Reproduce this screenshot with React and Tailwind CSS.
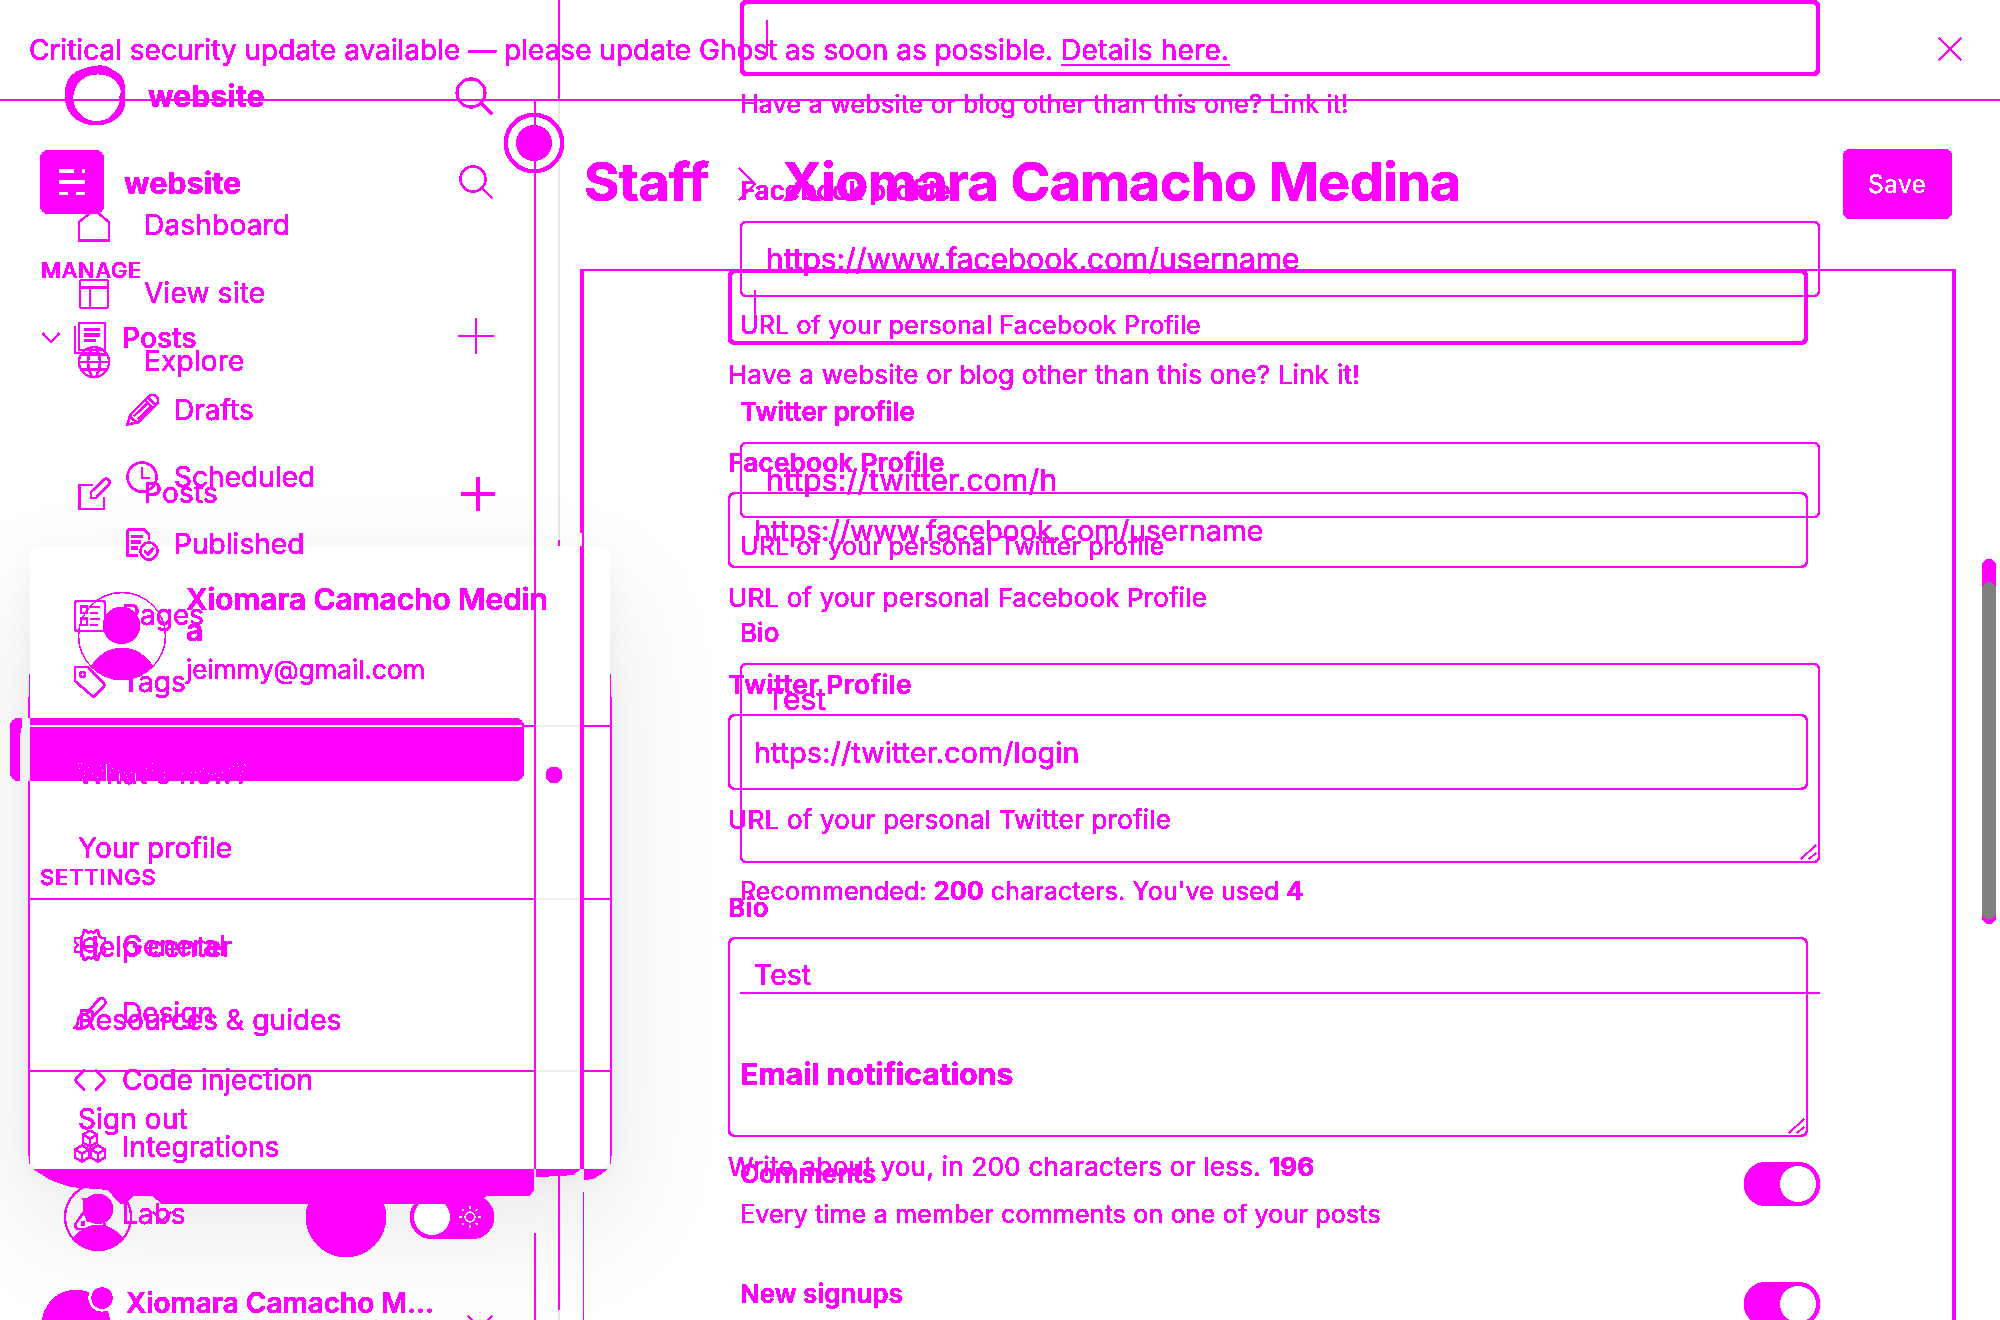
const M = "#f0f";

function Ico({ x, y, w = 34, h = 34, className = "", children, sw = 2 }) {
  return (
    <svg
      className={"shrink-0 " + className}
      width={w}
      height={h}
      viewBox={`${x} ${y} ${w} ${h}`}
      fill="none"
      stroke={M}
      strokeWidth={sw}
    >
      {children}
    </svg>
  );
}

const Cube = ({ x, y }) => (
  <g transform={`translate(${x} ${y})`}>
    <path d="M0 -8L7 -4V4L0 8L-7 4V-4Z" />
    <path d="M-7 -4L0 0L7 -4M0 0V8" />
  </g>
);

function HardEdge() {
  return (
    <svg className="absolute" width="0" height="0">
      <filter id="hard" x="0" y="0" width="100%" height="100%" colorInterpolationFilters="sRGB">
        <feComponentTransfer>
          <feFuncG type="discrete" tableValues="0 0 1 1" />
          <feFuncA type="discrete" tableValues="0 1 1 1 1 1 1 1" />
        </feComponentTransfer>
      </filter>
    </svg>
  );
}

/* ---------- first layer: update banner, staff page ---------- */

function NavA({ icon, children, className = "", sub }) {
  return (
    <div className={"flex h-[67px] items-center text-[28px] tracking-[0.05px] " + (sub ? "pl-[125px] " : "pl-[73px] ") + className}>
      {icon}
      <span className="ml-[15px]">{children}</span>
    </div>
  );
}

function SidebarA() {
  return (
    <aside className="w-[534px] shrink-0">
      <div className="mt-[49px] ml-[40px] flex h-[64px] items-center">
        <div className="flex h-[64px] w-[64px] items-center justify-center rounded-[9px] bg-[#f0f]">
          <svg width="26" height="27" fill="#fff">
            <path d="M0 0H15V4H0Z M23 0H26V4H23Z M0 11H26V15H0Z M0 23H9V26H0Z M17 23H26V26H17Z" />
          </svg>
        </div>
        <span className="mt-[2px] ml-[20px] text-[30px] font-bold tracking-[0.3px]">website</span>
        <Ico x={458} y={164} w={36} h={36} className="mr-[40px] ml-auto" sw={1.8}>
          <circle cx="473" cy="179" r="12.5" />
          <path d="M482 188L492 198" />
        </Ico>
      </div>
      <div className="mt-[43px] ml-[41px] h-[26px] text-[22px] leading-[26px] font-medium tracking-[0.7px]">MANAGE</div>
      <div className="mt-[21px] flex h-[67px] items-center text-[28px] font-medium tracking-[0.1px]">
        <Ico x={41} y={328} w={20} h={20} className="ml-[41px]" sw={1.6}>
          <path d="M42.500 333L51 342L59.500 333" />
        </Ico>
        <Ico x={73} y={321} className="ml-[12px]">
          <rect x="79" y="323" width="26" height="27" rx="1" />
          <path d="M75 326V353H100" />
          <path d="M84 329.500H100M84 335H100M84 340.500H96" strokeWidth="2.500" />
        </Ico>
        <span className="mt-[1px] ml-[15px]">Posts</span>
        <Ico x={457} y={317} w={38} h={38} className="-mt-[3px] mr-[39px] ml-auto" sw={1.6}>
          <path d="M458 336H494M476 318V354" />
        </Ico>
      </div>
      <NavA sub className="mt-[5px]" icon={
        <Ico x={125} y={392} sw={1.8}>
          <path d="M127.500 423.500L130 414L148.500 395.500A5.500 5.500 0 0 1 156.500 403.500L138 421.500Z" />
          <path d="M130 414L132 418L137 421M145 399L153 407M148 396.500L155.500 404M134 415L148 401.500M138 418L151 405" />
        </Ico>}>Drafts</NavA>
      <NavA sub icon={
        <Ico x={125} y={459}>
          <circle cx="142" cy="476" r="14.500" />
          <path d="M142 466.500V477H150" />
        </Ico>}>Scheduled</NavA>
      <NavA sub icon={
        <Ico x={125} y={527}>
          <path d="M138 555.500H127.500V532Q127.500 529.500 130 529.500H144L149 534.500V540" />
          <path d="M131 536.500H143M131 542H141M131 548H138" strokeWidth="2.500" />
          <circle cx="149" cy="551" r="8.500" />
          <path d="M144.500 551L148 554.500L153.500 548" strokeWidth="2.500" />
        </Ico>}>Published</NavA>
      <NavA className="mt-[4px]" icon={
        <Ico x={73} y={597}>
          <rect x="75" y="600" width="30" height="30" rx="2" />
          <path d="M81 605.500H87V612H81ZM81 617.500H87V624H81ZM90 606H100M90 612H98M90 618H100M90 624H98" />
        </Ico>}>Pages</NavA>
      <NavA icon={
        <Ico x={73} y={665}>
          <path d="M75 681V667H88L105 685L93.500 697Z" strokeLinejoin="round" />
          <circle cx="82.500" cy="674.500" r="2.500" />
        </Ico>}>Tags</NavA>
      <div className="mt-[3px] ml-[10px] h-[63px] w-[514px] rounded-[9px] bg-[#f0f]" />
      <div className="mt-[83px] ml-[40px] h-[26px] text-[22px] leading-[26px] font-medium tracking-[0.9px]">SETTINGS</div>
      <NavA className="mt-[22px]" icon={
        <Ico x={73} y={927} className="-mt-[1px]">
          <path d="M84 929H86L88 932L91 930.500L94 932L96 929H98L99 934L101 937H105V941L102 944L105 947V951H101L99 954L98 959H96L94 956L91 957.500L88 956L86 959H84L83 954L80 951H75V947L78 944L75 941V937H80L83 934Z" />
          <circle cx="90" cy="944" r="6.500" />
        </Ico>}>General</NavA>
      <NavA icon={
        <Ico x={73} y={995}>
          <path d="M86 1014L98.500 998.500A3.700 3.700 0 0 1 104.500 1003.500L91 1018Z" />
          <path d="M86 1013Q79 1012 78 1020Q77.500 1025 74.500 1027Q90 1029 92 1018" />
        </Ico>}>Design</NavA>
      <NavA icon={
        <Ico x={73} y={1062}>
          <path d="M84.500 1068.500L75 1079L84.500 1089.500M95.500 1068.500L105 1079L95.500 1089.500" />
        </Ico>}>Code injection</NavA>
      <NavA icon={
        <Ico x={73} y={1130}>
          <Cube x={90} y={1138.5} />
          <Cube x={82} y={1153.5} />
          <Cube x={98} y={1153.5} />
        </Ico>}>Integrations</NavA>
      <NavA icon={
        <Ico x={73} y={1196}>
          <path d="M82 1198H98M84.500 1198V1210L75.500 1223Q74 1228 79 1228H101Q106 1228 104.500 1223L96 1210V1198" />
          <circle cx="83" cy="1222.500" r="1.200" />
          <circle cx="88" cy="1219" r="0.800" />
        </Ico>}>Labs</NavA>
      <div className="mt-[39px] flex h-[40px] items-start">
        <Ico x={40} y={1285} w={76} h={40} className="ml-[40px]" sw={0}>
          <mask id="cut">
            <rect x="30" y="1270" width="100" height="100" fill="#fff" />
            <circle cx="102" cy="1297" r="14" fill="#000" />
          </mask>
          <circle cx="76" cy="1323" r="34" fill={M} mask="url(#cut)" />
          <circle cx="102" cy="1297" r="10.500" fill={M} />
        </Ico>
        <span className="mt-[3px] ml-[10px] w-[320px] text-[28px] leading-[28px] font-semibold">Xiomara Camacho M...</span>
        <Ico x={466} y={1308} w={28} h={17} className="mt-[24px] ml-[20px]" sw={1.6}>
          <path d="M468 1314L480 1326L492 1314" />
        </Ico>
      </div>
    </aside>
  );
}

function FieldA({ label, labelCls, children, inputCls, hint }) {
  return (
    <>
      <div className={"h-[30px] text-[26px] leading-[30px] font-semibold " + labelCls}>{label}</div>
      <div className={"mt-[14px] flex h-[76px] items-center rounded-[7px] border-2 border-[#f0f] pt-[2px] pl-[24px] text-[28.5px] " + inputCls}>{children}</div>
      <div className="mt-[15px] h-[30px] text-[26px] leading-[30px] tracking-[0.15px]">{hint}</div>
    </>
  );
}

const Grip = () => (
  <svg width="17" height="17" stroke={M} strokeWidth="1.4" fill="none">
    <path d="M1 15L16 1M9 15L16 9" />
  </svg>
);

function LayerA() {
  return (
    <div className="flex h-[1320px] w-[2000px] flex-col overflow-hidden [filter:url(#hard)] [grid-area:1/1]">
      <div className="flex h-[101px] shrink-0 items-center border-b-2 border-[#f0f] pr-[36px] pl-[29px] text-[28px]">
        <span className="whitespace-pre">
          Critical security update available — please update Ghost as soon as possible.{" "}
          <span className="tracking-[0.25px] underline decoration-2 underline-offset-[4px]">Details here.</span>
        </span>
        <Ico x={0} y={0} w={28} h={28} className="-mt-[2px] ml-auto" sw={1.6}>
          <path d="M3 3L25 25M25 3L3 25" />
        </Ico>
      </div>
      <div className="flex h-[1219px]">
        <SidebarA />
        <div className="flex w-[2px] shrink-0 flex-col">
          <div className="h-[1068px] shrink-0 bg-[#f0f]" />
          <div className="mt-[64px] h-[87px] bg-[#f0f]" />
        </div>
        <main className="flex grow flex-col">
          <header className="flex h-[168px] shrink-0 items-center pr-[48px] pl-[48px]">
            <div className="-mt-[8px] flex items-center text-[54px] font-bold">
              <span className="w-[153px] tracking-[-0.6px]">Staff</span>
              <Ico x={0} y={0} w={22} h={36} className="mt-[5px]" sw={1.6}>
                <path d="M2 2L18 18L2 34" />
              </Ico>
              <span className="ml-[23px] tracking-[-0.65px] whitespace-nowrap">Xiomara Camacho Medina</span>
            </div>
            <button className="-mt-[2px] ml-auto h-[70px] w-[109px] rounded-[8px] bg-[#f0f] pr-[1px] pt-[2px] text-[25px] font-medium text-white">Save</button>
          </header>
          <div className="ml-[44px] flex w-[1376px] grow border-t-2 border-r-4 border-[#f0f]">
            <div className="flex w-[4px] shrink-0 flex-col items-end">
              <div className="h-[262px] w-[4px] bg-[#f0f]" />
              <div className="h-[13px] w-[2px] bg-[#f0f]" />
              <div className="h-[623px] w-[4px] bg-[#f0f]" />
              <div className="mt-[23px] h-[128px] w-px bg-[#f0f]" />
            </div>
            <div className="-mt-[2px] ml-[144px] flex w-[1080px] flex-col">
              <div className="flex h-[76px] shrink-0 rounded-[7px] border-4 border-[#f0f] pl-[22px]">
                <div className="mt-[17px] h-[35px] w-[2px] bg-[#f0f]" />
              </div>
              <div className="mt-[15px] h-[30px] text-[26px] leading-[30px] tracking-[0.24px]">Have a website or blog other than this one? Link it!</div>
              <FieldA label="Facebook Profile" labelCls="mt-[58px] tracking-[0.35px]" inputCls="" hint="URL of your personal Facebook Profile">
                https://www.facebook.com/username
              </FieldA>
              <FieldA label="Twitter Profile" labelCls="mt-[57px] tracking-[0.6px]" inputCls="tracking-[0.17px]" hint={<span className="tracking-[0.2px]">URL of your personal Twitter profile</span>}>
                https://twitter.com/login
              </FieldA>
              <div className="mt-[58px] h-[30px] text-[26px] leading-[30px] font-semibold tracking-[0.35px]">Bio</div>
              <div className="mt-[14px] flex h-[200px] shrink-0 justify-between rounded-[7px] border-2 border-[#f0f] pl-[24px] text-[28.5px]">
                <span className="mt-[17px] leading-[38px]">Test</span>
                <div className="flex items-end pr-[1px]"><Grip /></div>
              </div>
              <div className="mt-[15px] h-[30px] text-[26px] leading-[30px] tracking-[0.27px]">
                Write about you, in 200 characters or less. <b>196</b>
              </div>
            </div>
          </div>
        </main>
      </div>
    </div>
  );
}

/* ---------- second layer: dashboard navigation, profile form ---------- */

function NavB({ icon, children, className = "", trailing }) {
  return (
    <div className={"flex h-[68px] shrink-0 items-center pl-[77px] text-[28px] tracking-[0.2px] " + className}>
      {icon}
      <span className="-mt-[2px] ml-[33px]">{children}</span>
      {trailing}
    </div>
  );
}

function SidebarB() {
  return (
    <aside className="flex h-[1320px] w-[558px] shrink-0 flex-col">
      <div className="mt-[64px] ml-[63px] flex h-[64px] shrink-0 items-center">
        <Ico x={63} y={64} w={64} h={64} sw={0}>
          <path
            fill={M}
            fillRule="evenodd"
            d="M97 66Q106 65 112 70Q122 74 124 82L125 96Q126 112 117 118Q106 126 93 125Q80 124 72 115Q65 108 65 94Q65 79 76 72Q86 67 97 66Z M98 74Q109 74 116 81Q122 88 121 93Q119 96 120 102Q116 113 108 119Q98 123 88 120Q75 114 73 101Q72 88 81 80Q88 74 98 74Z"
          />
        </Ico>
        <span className="ml-[21px] text-[30px] font-bold tracking-[0.2px]">website</span>
        <Ico x={454} y={76} w={40} h={40} className="mr-[64px] ml-auto" sw={2.4}>
          <circle cx="471" cy="93" r="14" />
          <path d="M481 103L492 114" />
        </Ico>
      </div>
      <NavB className="mt-[64px]" icon={
        <Ico x={77} y={209} className="-mt-[1px]" sw={1.7}>
          <path d="M79 222L90 213Q94 210 98 213L109 222V240.500H79Z" />
        </Ico>}>Dashboard</NavB>
      <NavB icon={
        <Ico x={77} y={277} sw={1.7}>
          <rect x="80" y="280" width="28" height="28" rx="1.500" />
          <path d="M80 287.500H108M90 287.500V308" />
        </Ico>}>View site</NavB>
      <NavB icon={
        <Ico x={77} y={345} sw={1.7}>
          <circle cx="94" cy="362" r="15" />
          <path d="M79 362H109M81 354.500H107M81 369.500H107" />
          <path d="M92 347Q84 362 92 377M96 347Q104 362 96 377" />
        </Ico>}>Explore</NavB>
      <NavB
        className="mt-[64px]"
        icon={
          <Ico x={77} y={477}>
            <path d="M93 485H79.500V509H104V497" />
            <path d="M91 498V492L104 479.500A3.600 3.600 0 0 1 109 484.500L96 498Z" />
          </Ico>}
        trailing={
          <Ico x={0} y={0} w={36} h={36} className="mr-[62px] ml-auto">
            <path d="M1 18H35M18 1V35" strokeWidth="2.6" />
          </Ico>}
      >Posts</NavB>
      <div className="mt-[649px] flex h-[80px] shrink-0 items-center">
        <svg className="-mt-[1px] ml-[63px]" width="70" height="70" viewBox="63 1181 70 70" fill={M}>
          <circle cx="98" cy="1216" r="33" fill="none" stroke={M} strokeWidth="1.600" />
          <circle cx="98" cy="1208" r="15" />
          <path d="M73 1237Q84 1224 98 1224Q112 1224 123 1237Q112 1250 98 1250Q84 1250 73 1237Z" />
        </svg>
        <Ico x={0} y={0} w={24} h={16} className="ml-[17px]" sw={1.6}>
          <path d="M3 3L12 12L21 3" />
        </Ico>
        <div className="ml-[132px] h-[80px] w-[80px] rounded-full bg-[#f0f]" />
        <div className="ml-[24px] flex h-[44px] w-[84px] items-center justify-between rounded-full bg-[#f0f] px-[4px]">
          <div className="h-[36px] w-[36px] rounded-full bg-white" />
          <svg className="mr-[8px]" width="24" height="24" viewBox="-12 -12 24 24" fill="none" stroke="#fff" strokeWidth="1.500">
            <circle r="5" />
            <path d="M0 -8V-11M0 8V11M-8 0H-11M8 0H11M-5.700 -5.700L-8 -8M5.700 5.700L8 8M-5.700 5.700L-8 8M5.700 -5.700L8 -8" />
          </svg>
        </div>
      </div>
    </aside>
  );
}

function InputB({ label, value, hint, valueCls }) {
  return (
    <>
      <div className="mt-[57px] h-[30px] shrink-0 text-[26px] leading-[30px] font-semibold">{label}</div>
      <div className={"mt-[15px] flex h-[76px] shrink-0 items-center rounded-[6px] border-2 border-[#f0f] pl-[24px] text-[30px] " + valueCls}>{value}</div>
      <div className="mt-[13px] h-[30px] shrink-0 text-[25px] leading-[30px] tracking-[0.15px]">{hint}</div>
    </>
  );
}

function SwitchRow({ title, text, className }) {
  return (
    <div className={"flex h-[70px] shrink-0 justify-between " + className}>
      <div className="whitespace-nowrap">
        <div className="h-[30px] text-[26px] leading-[30px] font-semibold">{title}</div>
        <div className="mt-[10px] h-[30px] text-[25px] leading-[30px] tracking-[0.18px]">{text}</div>
      </div>
      <div className="mt-[3px] flex h-[44px] w-[76px] items-center justify-end rounded-full bg-[#f0f] pr-[4px]">
        <div className="h-[36px] w-[36px] rounded-full bg-white" />
      </div>
    </div>
  );
}

function Popup() {
  const item = "h-[40px] text-[28px] leading-[40px] tracking-[0.1px]";
  return (
    <div className="absolute top-[546px] left-[30px] flex h-[623px] w-[580px] flex-col">
      <div className="flex h-[179px] pl-[47px]">
        <svg className="mt-[45px] shrink-0" width="90" height="90" viewBox="-45 -45 90 90" fill={M}>
          <circle r="43.500" fill="none" stroke={M} strokeWidth="0.700" />
          <circle cx="-0.500" cy="-10.500" r="18.500" />
          <path d="M-31 30Q-18 12 0 12Q18 12 31 30Q18 44 0 44Q-18 44 -31 30Z" />
        </svg>
        <div className="mt-[38px] ml-[19px]">
          <div className="w-[372px] text-[30px] leading-[31px] font-semibold tracking-[-0.1px] break-all">Xiomara Camacho Medina</div>
          <div className="mt-[7px] text-[26px] leading-[34px]">jeimmy@gmail.com</div>
        </div>
      </div>
      <div className="flex h-[173px] flex-col pl-[48px]">
        <div className={"mt-[29px] flex items-center justify-between pr-[48px] " + item}>
          What's new?
          <div className="mt-[2px] h-[16px] w-[16px] rounded-full bg-[#f0f]" />
        </div>
        <div className={"mt-[34px] " + item}>Your profile</div>
      </div>
      <div className="h-[2px] shrink-0 bg-[#f0f]" />
      <div className="flex h-[170px] flex-col pl-[48px]">
        <div className={"mt-[27px] " + item}>Help center</div>
        <div className={"mt-[33px] " + item}>Resources &amp; guides</div>
      </div>
      <div className="h-[2px] shrink-0 bg-[#f0f]" />
      <div className={"mt-[27px] ml-[48px] " + item}>Sign out</div>
    </div>
  );
}

function LayerB() {
  return (
    <div className="relative flex h-[1320px] w-[2000px] overflow-hidden [filter:url(#hard)] [grid-area:1/1]">
      <SidebarB />
      <div className="flex w-[2px] shrink-0 flex-col">
        <div className="h-[99px] bg-[#f0f]" />
        <div className="mt-[441px] h-[6px] bg-[#f0f]" />
        <div className="mt-[630px] h-[134px] bg-[#f0f]" />
      </div>
      <div className="ml-[180px] flex w-[1080px] shrink-0 flex-col">
        <div className="flex h-[76px] shrink-0 rounded-[6px] border-4 border-[#f0f] pl-[22px]">
          <div className="mt-[16px] h-[36px] w-[2px] bg-[#f0f]" />
        </div>
        <div className="mt-[13px] h-[30px] shrink-0 text-[25px] leading-[30px] tracking-[0.25px]">Have a website or blog other than this one? Link it!</div>
        <InputB label="Facebook profile" value="https://www.facebook.com/username" valueCls="tracking-[-0.08px]" hint="URL of your personal Facebook Profile" />
        <InputB label="Twitter profile" value="https://twitter.com/h" valueCls="tracking-[0.2px]" hint="URL of your personal Twitter profile" />
        <div className="mt-[57px] h-[30px] shrink-0 text-[26px] leading-[30px] font-medium">Bio</div>
        <div className="mt-[15px] flex h-[200px] shrink-0 justify-between rounded-[6px] border-2 border-[#f0f] pl-[24px] text-[30px]">
          <span className="mt-[15px] leading-[38px]">Test</span>
          <div className="flex items-end pr-[1px]"><Grip /></div>
        </div>
        <div className="mt-[13px] h-[30px] shrink-0 text-[25px] leading-[30px] tracking-[0.13px]">
          Recommended: <b>200</b> characters. You've used <b>4</b>
        </div>
        <div className="mt-[86px] h-[2px] shrink-0 bg-[#f0f]" />
        <div className="mt-[60px] h-[40px] shrink-0 text-[30px] leading-[40px] font-bold tracking-[0.12px]">Email notifications</div>
        <SwitchRow className="mt-[65px]" title="Comments" text="Every time a member comments on one of your posts" />
        <SwitchRow className="mt-[50px]" title="New signups" text="" />
      </div>
      <div className="absolute top-[113px] left-[504px] flex h-[60px] w-[60px] items-center justify-center rounded-full border-4 border-[#f0f] bg-white">
        <div className="h-[36px] w-[36px] rounded-full bg-[#f0f]" />
      </div>
      <Popup />
    </div>
  );
}

/* Card edge with the ragged band that hangs under it */
function CardEdge() {
  return (
    <svg className="relative [grid-area:1/1]" width="2000" height="1320" fill={M} shapeRendering="crispEdges">
      <path d="M33 1169L47 1178L55 1182L70 1187L108 1190L117 1201L120 1204H126L133 1196H152L162 1204H306H410L486 1196H530L534 1190V1169Z" />
      <path d="M386 1169H486V1196L480 1204H386Z" />
      <path d="M536 1169H581L573 1175L561 1176L536 1177Z M584 1169H608L600 1175L593 1179L584 1180Z" />
      <path d="M29 674H30V697H29Z M28 697H30V736H28Z M28 781H30V1156H28Z M29 1156H30V1164H29Z M610 674H611V697H610Z M610 697H612V1156H610Z M610 1156H611V1164H610Z" />
    </svg>
  );
}

const specks = [
  [78, 763], [81, 763], [79, 768], [88, 767], [84, 771], [92, 773], [84, 775], [82, 779], [100, 765], [97, 777], [102, 770], [109, 763], [112, 768], [118, 770], [110, 772], [124, 772], [126, 775], [127, 778], [131, 772], [146, 768], [152, 763], [152, 770], [164, 772], [164, 777], [182, 773], [191, 772], [195, 772], [200, 771], [203, 768], [208, 773], [212, 774], [215, 773], [218, 777], [222, 772], [229, 768], [233, 766], [237, 763], [238, 766], [242, 771], [244, 764], [245, 765], [240, 775],
];

function GrayMarks() {
  return (
    <svg className="relative [grid-area:1/1]" width="2000" height="1320" shapeRendering="crispEdges">
      <path fill="#efefef" d="M30 725H522V727H30Z M536 725H580V727H536Z M536 898H580V900H536Z M536 1070H580V1072H536Z" />
      <path fill={M} d="M524 725H534V727H524Z M584 725H610V727H584Z" />
      <path fill="#f1f1f1" d="M22 718H30V781H20V735Q22 730 22 718Z" />
      <path fill="#fff" d="M106 764H107V781H106Z M119 773H120V781H119Z M135 773H136V781H135Z" />
      {specks.map(([x, y], i) => (
        <rect key={i} x={x} y={y} width="1" height="1" fill="#fff" />
      ))}
      <rect x="1982" y="559" width="14" height="365" rx="7" fill={M} />
      <rect x="1982" y="582" width="14" height="337" rx="7" fill="#808080" />
    </svg>
  );
}

export default function App() {
  return (
    <div className="relative grid h-[1320px] w-[2000px] overflow-hidden bg-white font-['Inter',sans-serif] text-[#f0f]">
      <HardEdge />
      <div className="relative flex h-[1320px] w-[2000px] overflow-hidden [grid-area:1/1]">
        <div className="mt-[101px] ml-[558px] h-[1219px] w-[2px] bg-[#e6e6e6]" />
        <div className="absolute top-[546px] left-[30px] h-[623px] w-[580px] rounded-[9px] bg-white shadow-[0_50px_120px_rgba(0,0,0,0.10),0_8px_28px_rgba(0,0,0,0.04)]" />
      </div>
      <LayerB />
      <LayerA />
      <CardEdge />
      <GrayMarks />
    </div>
  );
}
